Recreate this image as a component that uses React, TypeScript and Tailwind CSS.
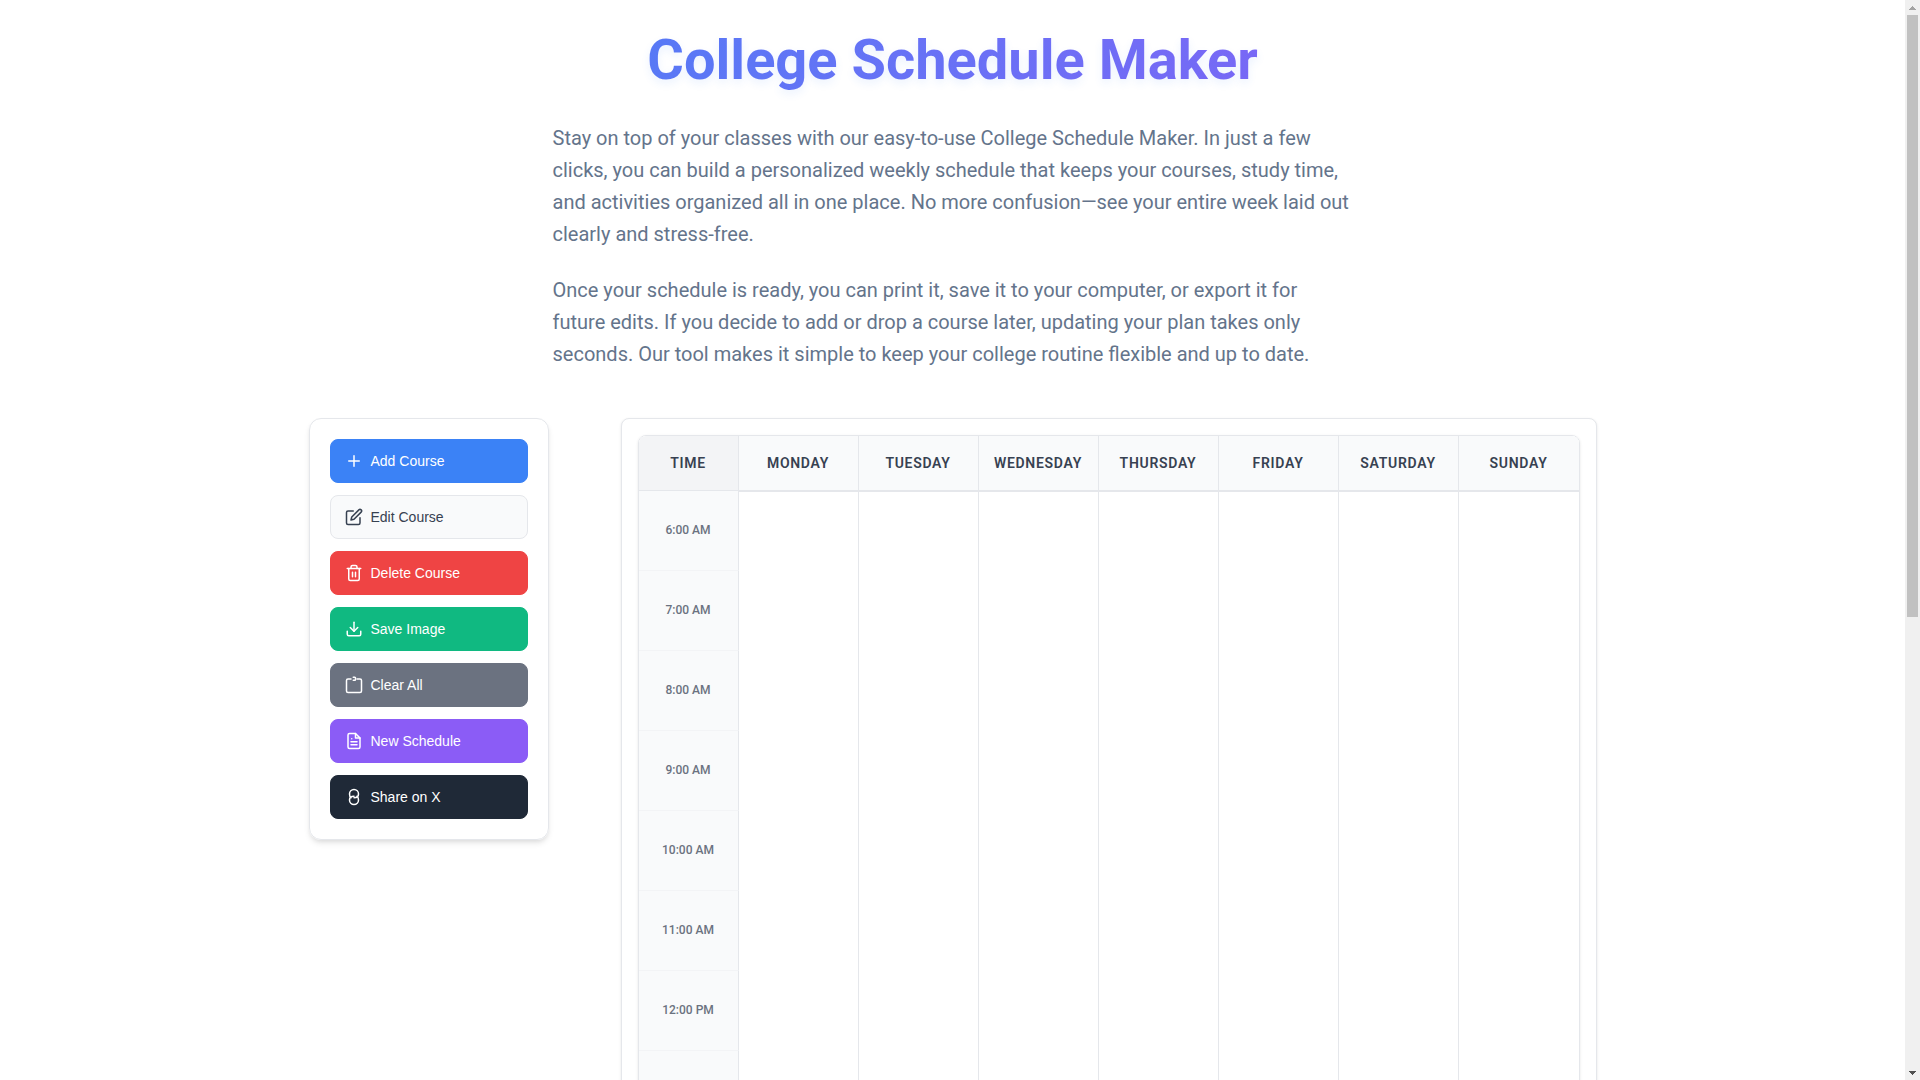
import React from 'react';

// --- DATA ---
const DAYS = ['Monday', 'Tuesday', 'Wednesday', 'Thursday', 'Friday', 'Saturday', 'Sunday'];
const HOURS = Array.from({ length: 17 }, (_, i) => i + 6);

const formatHour = (hour: number) => `${hour % 12 === 0 ? 12 : hour % 12}:00 ${hour < 12 ? 'AM' : 'PM'}`;

interface Action {
    label: string;
    className: string;
    icon: React.ReactNode;
}

const ACTIONS: Action[] = [
    {
        label: 'Add Course',
        className: 'border-[#3b82f6] bg-[#3b82f6] text-white',
        icon: <path d="M12 5v14M5 12h14" />,
    },
    {
        label: 'Edit Course',
        className: 'border-[#e5e7eb] bg-[#f9fafb] text-[#374151]',
        icon: <><path d="M11 4H4a2 2 0 0 0-2 2v14a2 2 0 0 0 2 2h14a2 2 0 0 0 2-2v-7" /><path d="M18.5 2.5a2.121 2.121 0 0 1 3 3L12 15l-4 1 1-4 9.5-9.5z" /></>,
    },
    {
        label: 'Delete Course',
        className: 'border-[#ef4444] bg-[#ef4444] text-white',
        icon: <><path d="M3 6h18" /><path d="M19 6v14a2 2 0 0 1-2 2H7a2 2 0 0 1-2-2V6m3 0V4a2 2 0 0 1 2-2h4a2 2 0 0 1 2 2v2" /><path d="M10 11v6M14 11v6" /></>,
    },
    {
        label: 'Save Image',
        className: 'border-[#10b981] bg-[#10b981] text-white',
        icon: <><path d="M21 15v4a2 2 0 0 1-2 2H5a2 2 0 0 1-2-2v-4" /><path d="M7 10l5 5 5-5" /><path d="M12 15V3" /></>,
    },
    {
        label: 'Clear All',
        className: 'border-[#6b7280] bg-[#6b7280] text-white',
        icon: <><path d="M8 4H4a2 2 0 0 0-2 2v14a2 2 0 0 0 2 2h16a2 2 0 0 0 2-2V6a2 2 0 0 0-2-2h-4" /><path d="M11 1.5h2a1 1 0 0 1 1 1v2a1 1 0 0 1-1 1h-2" /></>,
    },
    {
        label: 'New Schedule',
        className: 'border-[#8b5cf6] bg-[#8b5cf6] text-white',
        icon: <><path d="M14 2H6a2 2 0 0 0-2 2v16a2 2 0 0 0 2 2h12a2 2 0 0 0 2-2V8z" /><path d="M14 2v6h6" /><path d="M16 13H8M16 17H8M9 9h.01" /></>,
    },
    {
        label: 'Share on X',
        className: 'border-[#1f2937] bg-[#1f2937] text-white',
        icon: <><path d="M8 13c-1.500-1-2-2.500-2-5a6 6 0 0 1 12 0c0 3.500-2 5-6 5" /><path d="M16 11c1.500 1 2 2.500 2 5a6 6 0 0 1-12 0c0-3.500 2-5 6-5" /></>,
    },
];

// --- COMPONENTS ---
const ActionButton: React.FC<{ action: Action }> = ({ action }) => (
    <button type="button" className={`flex h-11 w-full items-center gap-2 rounded-lg border px-3.5 text-left text-sm ${action.className}`}>
        <svg className="size-[18px] shrink-0" viewBox="0 0 24 24" fill="none" stroke="currentColor" strokeWidth="2" strokeLinecap="round" strokeLinejoin="round" aria-hidden="true">
            {action.icon}
        </svg>
        {action.label}
    </button>
);

const ScheduleTable: React.FC = () => (
    <div className="overflow-hidden rounded-lg border border-[#e5e7eb] shadow-[0_1px_3px_rgba(0,0,0,0.1)]">
        <table className="table-fixed border-separate border-spacing-0 bg-white">
            <thead>
                <tr className="h-[55px] text-sm tracking-wider text-[#374151] uppercase">
                    <th scope="col" className="w-[100px] border-r border-b border-[#e5e7eb] bg-[#f3f4f6] p-0 font-semibold">Time</th>
                    {DAYS.map(day => (
                        <th key={day} scope="col" className="w-[120px] border-r border-b border-[#e5e7eb] bg-[#f9fafb] p-0 font-semibold last:border-r-0">{day}</th>
                    ))}
                </tr>
            </thead>
            <tbody>
                {HOURS.map((hour, i) => (
                    <tr key={hour} className="h-20">
                        <th scope="row" className="border-r border-b border-r-[#e5e7eb] border-b-[#f3f4f6] bg-[#f9fafb] p-0 pb-px text-xs font-medium text-[#6b7280]">{formatHour(hour)}</th>
                        {DAYS.map(day => (
                            <td key={day} className={`border-r border-[#e5e7eb] p-0 last:border-r-0 ${i === 0 ? 'border-t' : ''}`}></td>
                        ))}
                    </tr>
                ))}
            </tbody>
        </table>
    </div>
);

const ScrollRail: React.FC = () => (
    <div className="flex w-[15px] shrink-0 flex-col items-center bg-[#f0f0f0]" aria-hidden="true">
        <div className="flex h-[15px] items-center">
            <svg className="h-1 w-[7px]" viewBox="0 0 7 4" shapeRendering="crispEdges"><path d="M3 0h1v1h1v1h1v1h1v1H0V3h1V2h1V1h1z" fill="#a3a3a3" /></svg>
        </div>
        <div className="flex w-[11px] grow flex-col">
            <div className="h-[57.3%] bg-[#c1c1c1]"></div>
        </div>
        <div className="flex h-[15px] items-center">
            <svg className="h-1 w-[7px]" viewBox="0 0 7 4" shapeRendering="crispEdges"><path d="M0 0h7v1H6v1H5v1H4v1H3V3H2V2H1V1H0z" fill="#505050" /></svg>
        </div>
    </div>
);

// --- MAIN COMPONENT ---
const App: React.FC = () => (
    <div className="flex h-screen bg-white font-['Roboto',sans-serif]">
        <main className="grow overflow-y-auto px-4 pt-6 pb-4 [scrollbar-width:none]">
            <header className="mx-auto mb-12 max-w-[1288px]">
                <h1 className="mb-[26px] bg-linear-135 from-[#3b82f6] to-[#8b5cf6] bg-clip-text text-center text-[56px] leading-[72px] font-bold text-transparent [text-shadow:0_4px_8px_rgba(59,130,246,0.1)]">College Schedule Maker</h1>
                <div className="mx-auto flex max-w-[800px] flex-col gap-6 text-xl leading-8 text-[#64748b]">
                    <p>
                        Stay on top of your classes with our easy-to-use College Schedule Maker. In just a few clicks, you can build a personalized weekly schedule that keeps your courses, study time, and activities organized all in one place. No more confusion—see your entire week laid out clearly and stress-free.
                    </p>
                    <p>
                        Once your schedule is ready, you can print it, save it to your computer, or export it for future edits. If you decide to add or drop a course later, updating your plan takes only seconds. Our tool makes it simple to keep your college routine flexible and up to date.
                    </p>
                </div>
            </header>
            <div className="flex items-start justify-center gap-18">
                <nav className="flex w-60 shrink-0 flex-col gap-3 rounded-xl border border-[#e5e7eb] p-5 font-['Liberation_Sans',sans-serif] shadow-[0_4px_6px_-1px_rgba(0,0,0,0.1),0_2px_4px_-1px_rgba(0,0,0,0.06)]">
                    {ACTIONS.map(action => <ActionButton key={action.label} action={action} />)}
                </nav>
                <section className="rounded-lg border border-[#e5e7eb] bg-white p-4 shadow-[0_1px_3px_rgba(0,0,0,0.1)]">
                    <ScheduleTable />
                </section>
            </div>
        </main>
        <ScrollRail />
    </div>
);

export default App;
